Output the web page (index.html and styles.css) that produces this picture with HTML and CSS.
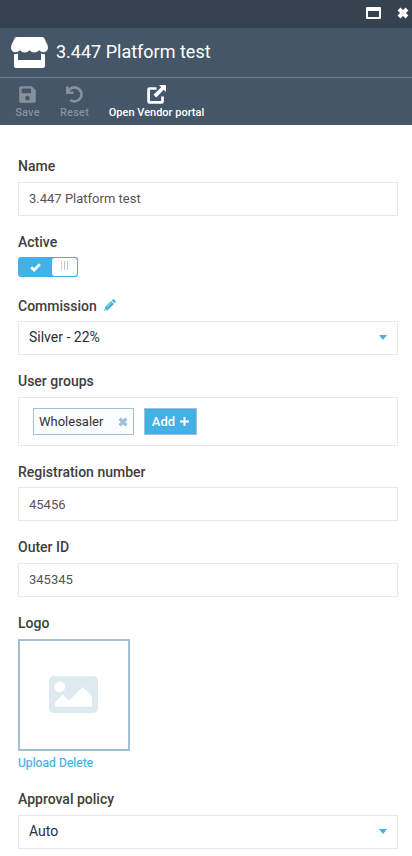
FILE: index.html
```html
<!DOCTYPE html>
<html lang="en">
<head>
<meta charset="utf-8">
<title>3.447 Platform test</title>
<link rel="stylesheet" href="styles.css">
</head>
<body>
<div class="blade">
  <div class="controls">
    <svg width="15" height="12" viewBox="0 0 15 12"><path fill-rule="evenodd" d="M1 0h13a1 1 0 0 1 1 1v10a1 1 0 0 1-1 1H1a1 1 0 0 1-1-1V1a1 1 0 0 1 1-1zm1 4v6h11V4z"/></svg>
    <svg width="12" height="12" viewBox="0 0 12 12"><path class="cross" d="M2 2l8 8M10 2l-8 8"/></svg>
  </div>
  <header class="title">
    <svg width="37" height="31" viewBox="0 0 37 31"><path d="M6 0h25q1.500 0 2.300 1.300L36.300 7.500C38 11.500 36 15.300 32.500 15.300q-2.500 0-4.500-2-2 2.200-4.700 2.200t-4.800-2.200q-2 2.200-4.700 2.200t-4.800-2.200q-2 2-4.500 2C1 15.300-1 11.500.7 7.500L3.700 1.300Q4.500 0 6 0zM3 17.200q2.400.2 4-.7v6.500h23v-6.500q1.600.9 4 .7v11.800q0 2-2 2H5q-2 0-2-2z"/></svg>
    <h1>3.447 Platform test</h1>
  </header>
  <nav class="toolbar">
    <button class="tool save disabled">
      <svg width="17" height="19" viewBox="0 0 448 512"><path d="M433.900 129.900l-83.900-83.900A48 48 0 0 0 316.100 32H48C21.500 32 0 53.500 0 80v352c0 26.500 21.500 48 48 48h352c26.500 0 48-21.500 48-48V163.900a48 48 0 0 0-14.100-34zM224 416c-35.300 0-64-28.700-64-64s28.700-64 64-64 64 28.700 64 64-28.700 64-64 64zm96-304.500V212c0 6.600-5.400 12-12 12H76c-6.600 0-12-5.400-12-12V108c0-6.600 5.400-12 12-12h228.500c3.200 0 6.200 1.300 8.500 3.500l3.500 3.500a12 12 0 0 1 3.500 8.500z"/></svg>
      <span>Save</span>
    </button>
    <button class="tool reset disabled">
      <svg width="17" height="19" viewBox="0 0 17 19"><path d="M0 1.500h2.500v5h5V9H0z"/><path class="frame" d="M1.800 7.200A7 7 0 1 1 4.300 15"/></svg>
      <span>Reset</span>
    </button>
    <button class="tool portal">
      <svg width="19" height="19" viewBox="0 0 19 19"><path d="M12 0h6a1 1 0 0 1 1 1v6l-2.200-2.200-7.600 7.700L6.500 9.800l7.700-7.600z"/><path class="frame" d="M9.500 3.500H2.600a1 1 0 0 0-1 1v11.900a1 1 0 0 0 1 1h11.900a1 1 0 0 0 1-1v-5"/></svg>
      <span>Open Vendor portal</span>
    </button>
  </nav>
  <main class="form">
    <section class="field">
      <label>Name</label>
      <div class="input">3.447 Platform test</div>
    </section>
    <section class="field field-switch tight">
      <label>Active</label>
      <div class="switch">
        <svg width="11" height="9" viewBox="0 0 11 9"><path class="check" d="M1.200 4.200l2.900 2.800L9.800 1.200"/></svg>
        <span class="knob"><i></i><i></i><i></i></span>
      </div>
    </section>
    <section class="field tight">
      <label>Commission
        <svg class="pencil" width="12" height="12" viewBox="0 0 12 12"><path d="M.3 11.700l.8-3.700L7 2.100 9.900 5 4 10.900zM7.700 1.400l1-1q.7-.6 1.400 0l1.500 1.500q.6.7 0 1.400l-1 1z"/><path class="shine" d="M2.800 8L7.200 3.600M1 9.800l1.200 1.200"/></svg>
      </label>
      <div class="input select">Silver - 22%<b class="caret"></b></div>
    </section>
    <section class="field">
      <label>User groups</label>
      <div class="input groups">
        <span class="tag">Wholesaler<svg width="10" height="10" viewBox="0 0 12 12"><path class="cross" d="M2 2l8 8M10 2l-8 8"/></svg></span>
        <button class="add">Add<svg width="9" height="9" viewBox="0 0 9 9"><path d="M3.500 0h2v3.500H9v2H5.500V9h-2V5.500H0v-2h3.500z"/></svg></button>
      </div>
    </section>
    <section class="field tight">
      <label>Registration number</label>
      <div class="input low">45456</div>
    </section>
    <section class="field">
      <label>Outer ID</label>
      <div class="input">345345</div>
    </section>
    <section class="field">
      <label>Logo</label>
      <div class="logo"><svg width="49" height="37" viewBox="0 64 512 384"><path d="M464 448H48c-26.500 0-48-21.500-48-48V112c0-26.500 21.500-48 48-48h416c26.500 0 48 21.500 48 48v288c0 26.500-21.500 48-48 48zM112 120c-30.900 0-56 25.100-56 56s25.100 56 56 56 56-25.100 56-56-25.100-56-56-56zM64 384h384V272l-87.500-87.500c-4.700-4.700-12.300-4.700-17 0L208 320l-55.500-55.500c-4.700-4.700-12.300-4.700-17 0L64 336v48z"/></svg></div>
      <div class="links"><a>Upload</a> <a>Delete</a></div>
    </section>
    <section class="field">
      <label>Approval policy</label>
      <div class="input select">Auto<b class="caret"></b></div>
    </section>
  </main>
</div>
</body>
</html>
```

FILE: styles.css
```css
* { box-sizing: border-box; }
body { margin: 0; background: #fff; font-family: Roboto, "Liberation Sans", sans-serif; color: #333; overflow: hidden; }
svg { display: block; fill: currentColor; flex: none; }
button { font-family: inherit; border: 0; padding: 0; background: none; color: inherit; }
.blade { height: 856px; }
.cross { fill: none; stroke: currentColor; stroke-width: 4; }

.controls { height: 28px; background: #35424f; color: #fff; display: flex; justify-content: flex-end; gap: 16px; padding: 7px 3px 0 0; }
.title { height: 50px; background: #465669; border-bottom: 1px solid #6b7a8a; color: #fff; display: flex; align-items: center; gap: 8px; padding-left: 11px; }
.title h1 { margin: 0; font-size: 18px; font-weight: 400; line-height: 24px; padding-bottom: 1px; }
.toolbar { height: 47px; background: #465669; color: #fff; display: flex; gap: 20px; padding: 7px 0 0 15px; }
.tool { display: flex; flex-direction: column; align-items: center; font-size: 11px; font-weight: 500; line-height: 14px; height: 35px; justify-content: space-between; white-space: nowrap; }
.save { width: 25px; letter-spacing: .2px; }
.reset { width: 29px; letter-spacing: .2px; }
.portal { width: 95px; }
.tool.disabled { color: #87919c; }
.frame { fill: none; stroke: currentColor; stroke-width: 2.700; }

.form { padding: 31px 14px 0 18px; }
.field { margin-bottom: 16px; }
.field label { display: flex; align-items: center; height: 20px; margin-bottom: 6px; font-size: 14px; font-weight: 500; color: #3e3e3e; }
.field.tight label { margin-bottom: 5px; }
.field-switch { margin-bottom: 19px; }
.input { height: 34px; border: 1px solid #e8e9f2; padding: 0 10px; font-size: 13px; line-height: 32px; color: #555; }
.input.low { line-height: 34px; }
.select { display: flex; justify-content: space-between; font-size: 14px; color: #2b2d38; line-height: 30px; }
.caret { margin-top: 13px; height: 5px; border: 4px solid transparent; border-top: 5px solid #43b0e6; border-bottom: 0; }
.pencil { margin: 0 0 2px 7px; color: #43b0e6; }
.shine { stroke: #fff; stroke-width: .6; fill: none; }

.switch { width: 60px; height: 20px; border-radius: 3px; background: #43b0e6; color: #fff; display: flex; align-items: center; justify-content: space-between; padding: 1px 1px 1px 12px; }
.check { fill: none; stroke: currentColor; stroke-width: 2.800; }
.knob { width: 25px; height: 18px; border-radius: 3px; background: #fff; display: flex; justify-content: center; gap: 2px; padding-top: 3px; }
.knob i { width: 1px; height: 9px; background: #c0c6d0; }
.knob i:first-child { margin-left: -1px; background: #e8cfc0; }

.groups { height: 49px; padding: 10px 14px; display: flex; gap: 10px; line-height: 25px; }
.tag { width: 101px; height: 27px; border: 1px solid #a2c0d4; background: #fafcff; color: #333; padding: 0 5px; display: flex; align-items: center; justify-content: space-between; }
.tag svg { color: #a2c0d4; }
.add { width: 53px; height: 27px; border: 1px solid #a2c0d4; background: #43b0e6; color: #fff; font-size: 13px; font-weight: 500; display: flex; align-items: center; justify-content: center; gap: 5px; }
.add svg { margin-bottom: 1px; }

.logo { width: 112px; height: 112px; border: 2px solid #a2c0d4; color: #dfe9f0; display: flex; align-items: center; justify-content: center; padding: 0 1px 1px 0; }
.links { height: 22px; line-height: 24px; font-size: 12px; letter-spacing: .06px; color: #43b0e6; -webkit-text-stroke: .2px #43b0e6; }
```
